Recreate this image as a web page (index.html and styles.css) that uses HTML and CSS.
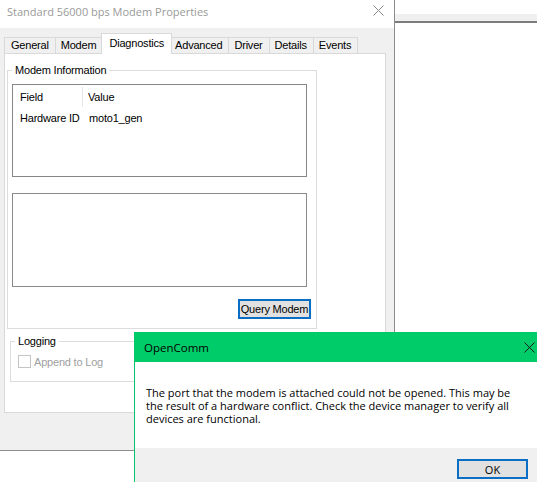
FILE: index.html
```html
<!DOCTYPE html>
<html>
<head>
<meta charset="utf-8">
<link rel="stylesheet" href="styles.css">
</head>
<body>
<div class="bgwin"><div class="band"></div></div>

<div class="props">
  <div class="titlebar">
    <span class="title">Standard 56000 bps Modem Properties</span>
    <svg class="close" width="11" height="11" viewBox="0 0 11 11"><path d="M0.5 0.5 L10.5 10.5 M10.5 0.5 L0.5 10.5" stroke="#8a8a8a" stroke-width="1" fill="none"/></svg>
  </div>
  <div class="tabarea">
    <div class="tabs">
      <div class="tab">General</div>
      <div class="tab">Modem</div>
      <div class="tab sel">Diagnostics</div>
      <div class="tab">Advanced</div>
      <div class="tab">Driver</div>
      <div class="tab">Details</div>
      <div class="tab">Events</div>
    </div>
    <div class="panel">
      <fieldset class="group info">
        <legend>Modem Information</legend>
        <div class="listview">
          <div class="lvhead">
            <div class="col c1">Field</div>
            <div class="col c2">Value</div>
          </div>
          <div class="lvrow">
            <div class="col c1">Hardware ID</div>
            <div class="col c2">moto1_gen</div>
          </div>
        </div>
        <div class="logbox"></div>
        <div class="btnrow"><button class="btn query">Query Modem</button></div>
      </fieldset>
      <fieldset class="group logging">
        <legend>Logging</legend>
        <label class="check"><span class="box"></span><span class="ltext">Append to Log</span></label>
      </fieldset>
    </div>
  </div>
</div>

<div class="msg">
  <div class="mtitle">
    <span>OpenComm</span>
    <svg class="mclose" width="11" height="11" viewBox="0 0 11 11"><path d="M0.5 0.5 L10.5 10.5 M10.5 0.5 L0.5 10.5" stroke="#1a1a1a" stroke-width="1" fill="none"/></svg>
  </div>
  <div class="mbody">
    <div class="mline">The port that the modem is attached could not be opened. This may be</div>
    <div class="mline">the result of a hardware conflict. Check the device manager to verify all</div>
    <div class="mline">devices are functional.</div>
  </div>
  <div class="mfoot"><button class="btn ok">OK</button></div>
</div>
</body>
</html>
```

FILE: styles.css
```css
html, body {
  margin: 0;
  padding: 0;
}
body {
  width: 537px;
  height: 482px;
  overflow: hidden;
  position: relative;
  background: #ffffff;
  font-family: "Liberation Sans", Arial, sans-serif;
  font-size: 11px;
  color: #000;
}

/* background window on the right */
.bgwin {
  position: absolute;
  left: 395px;
  top: 0;
  right: 0;
  bottom: 0;
  background: #fff;
}
.bgwin .band {
  margin-top: 14px;
  height: 7px;
  background: #f0f0f0;
  border-bottom: 2px solid #7c7c7c;
}

/* properties dialog */
.props {
  position: absolute;
  left: 0;
  top: 0;
  width: 394px;
  height: 450px;
  border-right: 1px solid #8c8c8c;
  border-bottom: 1px solid #8c8c8c;
  background: #f0f0f0;
  display: flex;
  flex-direction: column;
}
.titlebar {
  height: 28px;
  flex: none;
  box-sizing: border-box;
  background: #fff;
  display: flex;
  align-items: flex-start;
  justify-content: space-between;
  padding: 3px 10px 0 7px;
  font-family: "Open Sans", "Noto Sans", sans-serif;
  font-size: 11px;
  line-height: 18px;
  color: #9a9a9a;
}
.titlebar .close {
  margin-top: 2px;
}
.tabarea {
  padding: 6px 0 0 4px;
}
.tabs {
  display: flex;
  align-items: flex-end;
  height: 20px;
  position: relative;
  z-index: 2;
  margin-bottom: -1px;
}
.tab {
  height: 16px;
  box-sizing: border-box;
  border: 1px solid #d9d9d9;
  border-bottom: none;
  background: #f0f0f0;
  padding: 0 6px 0 5px;
  line-height: 15px;
  letter-spacing: -0.2px;
  margin-bottom: 1px;
  white-space: nowrap;
}
.tab + .tab {
  margin-left: -1px;
}
.tab:first-child {
  padding: 0 6px;
}
.tab.sel {
  height: 21px;
  background: #fff;
  margin-bottom: 0;
  margin-left: -2px;
  margin-right: -2px;
  padding: 0 7px;
  line-height: 19px;
  position: relative;
  z-index: 3;
}
.panel {
  width: 382px;
  height: 360px;
  box-sizing: border-box;
  background: #fff;
  border: 1px solid #d9d9d9;
  padding: 0;
  position: relative;
  z-index: 1;
}

.group {
  margin: 0;
  border: 1px solid #dcdcdc;
  min-width: 0;
  box-sizing: border-box;
}
.group legend {
  padding: 0 3px;
  line-height: 13px;
  letter-spacing: -0.2px;
}
.info {
  margin: 10px 0 0 2px;
  width: 310px;
  padding: 7px 4px 9px 4px;
}
.listview {
  width: 295px;
  height: 93px;
  box-sizing: border-box;
  border: 1px solid #868686;
  background: #fff;
}
.lvhead {
  display: flex;
  height: 24px;
  align-items: center;
}
.lvrow {
  display: flex;
  height: 18px;
  align-items: center;
}
.col {
  letter-spacing: -0.2px;
  white-space: nowrap;
}
.c1 {
  width: 70px;
  box-sizing: border-box;
  padding-left: 7px;
}
.c2 {
  padding-left: 6px;
}
.lvhead .c1 {
  border-right: 1px solid #e5e5e5;
  height: 20px;
  line-height: 20px;
}
.lvhead .c2 {
  padding-left: 5px;
}
.logbox {
  margin-top: 16px;
  width: 295px;
  height: 94px;
  box-sizing: border-box;
  border: 1px solid #8a8a8a;
  background: #fff;
}
.btnrow {
  display: flex;
  justify-content: flex-end;
  margin-top: 12px;
  padding-right: 1px;
}
.btn {
  box-sizing: border-box;
  border: 2px solid #0a6fc4;
  background: #e1e1e1;
  color: #000;
  margin: 0;
  padding: 0;
}
.query {
  width: 73px;
  height: 20px;
  font-family: "Liberation Sans", Arial, sans-serif;
  font-size: 11px;
  letter-spacing: -0.2px;
}
.logging {
  margin: 6px 0 0 5px;
  width: 307px;
  padding: 7px 4px 13px 4px;
}
.check {
  display: flex;
  align-items: center;
  height: 13px;
  margin-left: 3px;
}
.check .box {
  width: 13px;
  height: 13px;
  box-sizing: border-box;
  border: 1px solid #c4c4c4;
  background: #fff;
}
.check .ltext {
  margin-left: 3px;
  color: #a0a0a0;
  letter-spacing: -0.2px;
}

/* message box */
.msg {
  position: absolute;
  left: 134px;
  top: 332px;
  width: 410px;
  height: 160px;
  box-sizing: border-box;
  border: 1px solid #00c86a;
  background: #fff;
  display: flex;
  flex-direction: column;
  font-family: "Open Sans", "Noto Sans", sans-serif;
  font-size: 11px;
  z-index: 5;
}
.mtitle {
  height: 29px;
  flex: none;
  background: #00cc6a;
  display: flex;
  align-items: center;
  justify-content: space-between;
  padding: 0 8px 0 9px;
  font-size: 11.5px;
  color: #000;
}
.mbody {
  height: 86px;
  flex: none;
  box-sizing: border-box;
  padding: 24px 0 0 11px;
  color: #000;
  white-space: nowrap;
}
.mline {
  height: 13px;
  line-height: 13px;
}
.mfoot {
  flex: 1;
  background: #f0f0f0;
  display: flex;
  justify-content: flex-end;
  align-items: flex-start;
  padding: 11px 15px 0 0;
}
.ok {
  width: 71px;
  height: 20px;
  font-family: "Open Sans", "Noto Sans", sans-serif;
  font-size: 11px;
}
```
